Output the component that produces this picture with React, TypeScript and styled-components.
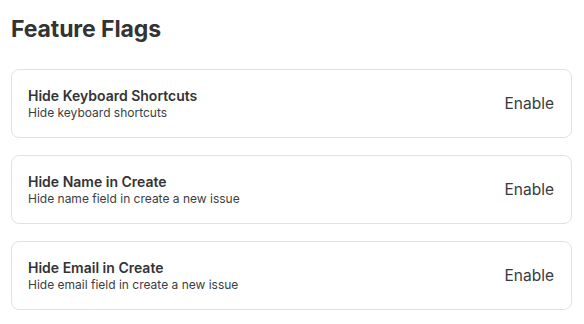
import styled, { createGlobalStyle } from 'styled-components';

const GlobalStyle = createGlobalStyle`
    html, body {
        margin: 0;
        padding: 0;
        background: #ffffff;
        font-family: Inter, "Noto Sans", sans-serif;
        -webkit-font-smoothing: antialiased;
    }
`;

const Page = styled.div`
    padding: 15px 12px 0 11px;
`;

const Heading = styled.h1`
    margin: 0 0 26px;
    font-size: 23px;
    line-height: 28px;
    font-weight: 700;
    color: #333335;
    letter-spacing: -0.1px;
`;

const List = styled.div`
    display: flex;
    flex-direction: column;
    gap: 17px;
`;

const Card = styled.div`
    box-sizing: border-box;
    height: 69px;
    display: flex;
    align-items: center;
    justify-content: space-between;
    padding: 0 17px 0 16px;
    border: 1px solid #e2e2e2;
    border-radius: 8px;
    background: #ffffff;
`;

const Info = styled.div`
    display: flex;
    flex-direction: column;
    padding-top: 1px;
`;

const Title = styled.div`
    font-size: 14px;
    line-height: 18px;
    font-weight: 600;
    color: #333335;
`;

const Description = styled.div`
    font-size: 12px;
    line-height: 16px;
    color: #3d3d3f;
`;

const EnableButton = styled.button`
    border: none;
    background: none;
    padding: 0;
    font-family: inherit;
    font-size: 15.5px;
    color: #3a3a3c;
    cursor: pointer;
`;

const flags = [
    { title: 'Hide Keyboard Shortcuts', description: 'Hide keyboard shortcuts' },
    { title: 'Hide Name in Create', description: 'Hide name field in create a new issue' },
    { title: 'Hide Email in Create', description: 'Hide email field in create a new issue' },
];

function App() {
    return (
        <Page>
            <GlobalStyle />
            <Heading>Feature Flags</Heading>
            <List>
                {flags.map((flag) => (
                    <Card key={flag.title}>
                        <Info>
                            <Title>{flag.title}</Title>
                            <Description>{flag.description}</Description>
                        </Info>
                        <EnableButton>Enable</EnableButton>
                    </Card>
                ))}
            </List>
        </Page>
    );
}

export default App;
